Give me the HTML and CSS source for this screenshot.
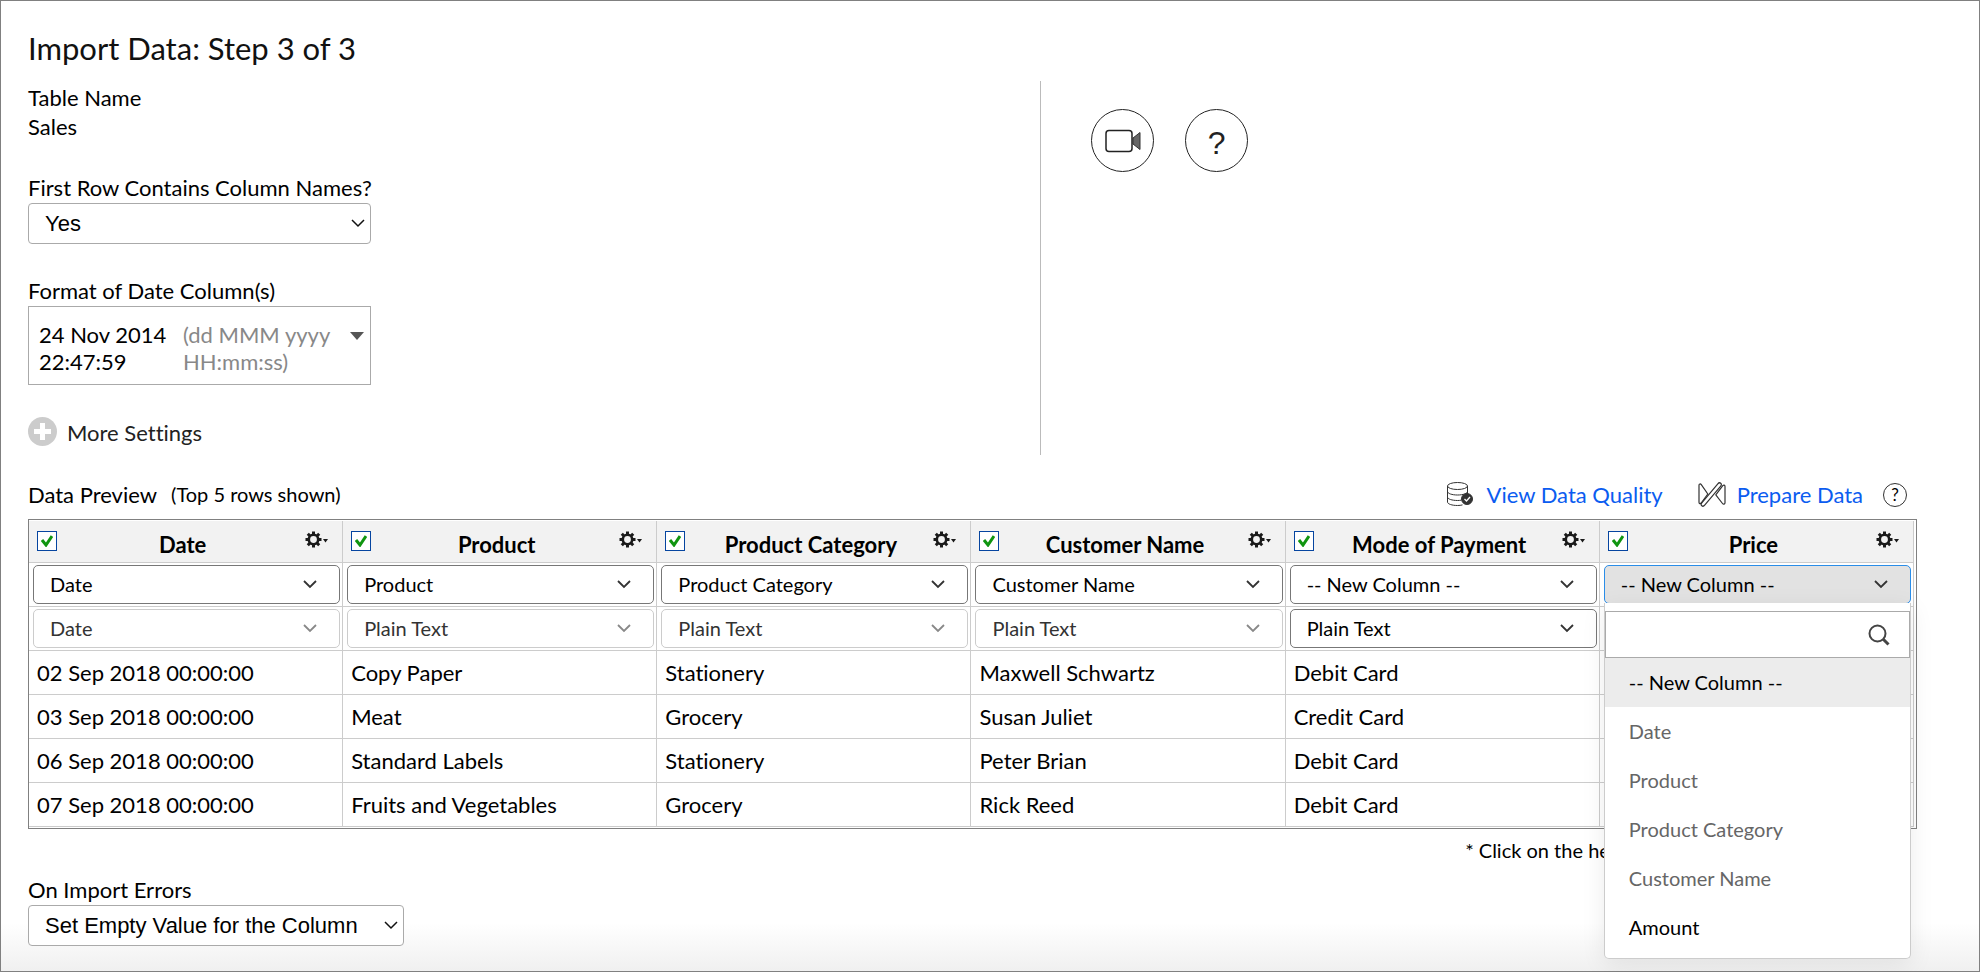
FILE: index.html
```html
<!DOCTYPE html>
<html lang="en">
<head>
  <meta charset="UTF-8" />
  <meta name="viewport" content="width=device-width, initial-scale=1.0" />
  <title>Import Data</title>
  <link rel="stylesheet" href="styles.css">
</head>
<body>
  <svg class="symbols" aria-hidden="true">
    <symbol id="gear" viewBox="0 0 24 18">
      <circle cx="8.500" cy="8.500" r="4.700" fill="none" stroke="#1a1a1a" stroke-width="2.600" />
      <path d="M8.500 .5v3M8.500 13.500v3M.5 8.500h3M13.500 8.500h3M2.800 2.800l2.200 2.200M12 12l2.200 2.200M2.800 14.200l2.200-2.200M12 5l2.200-2.200" stroke="#1a1a1a" stroke-width="3" />
      <path d="M18 8h5l-2.500 3.500z" fill="#1a1a1a" />
    </symbol>
  </svg>

  <main class="page">
    <h1>Import Data: Step 3 of 3</h1>

    <div class="settings">
      <form class="settings-form">
        <div class="field">
          <div>Table Name</div>
          <div>Sales</div>
        </div>
        <div class="field">
          <label for="first-row">First Row Contains Column Names?</label>
          <select id="first-row" class="plain-select">
            <option>Yes</option>
            <option>No</option>
          </select>
        </div>
        <div class="field">
          <label for="date-format">Format of Date Column(s)</label>
          <button type="button" id="date-format" class="date-format">
            <span class="sample">24 Nov 2014 22:47:59</span>
            <span class="pattern">(dd MMM yyyy HH:mm:ss)</span>
            <svg width="14" height="8" viewBox="0 0 14 8"><path d="M0 0h14L7 8z" fill="#555" /></svg>
          </button>
        </div>
        <button type="button" class="more">
          <svg width="29" height="29" viewBox="0 0 29 29">
            <circle cx="14.500" cy="14.500" r="14.500" fill="#ccc" />
            <path d="M14.500 6v17M6 14.500h17" stroke="#fff" stroke-width="5" />
          </svg>
          <span>More Settings</span>
        </button>
      </form>

      <div class="help">
        <button type="button" class="round" aria-label="Watch video">
          <svg width="36" height="24" viewBox="0 0 36 24">
            <path d="M28 9l7-5.500v17L28 15z" fill="#666" stroke="#333" />
            <rect x="1" y="1.500" width="26" height="21" rx="3" fill="#fff" stroke="#222" stroke-width="1.500" />
          </svg>
        </button>
        <button type="button" class="round question" aria-label="Help">?</button>
      </div>
    </div>

    <div class="preview-head">
      <h2>Data Preview</h2>
      <span class="rows-shown">(Top 5 rows shown)</span>
      <div class="links">
        <svg width="26" height="25" viewBox="0 0 26 25" fill="none" stroke="#333">
          <ellipse cx="10.500" cy="4" rx="10" ry="3.500" />
          <path d="M.5 4v16c0 2 4.500 3.500 10 3.500 2 0 3.500-.2 5-.6M20.500 4v8" />
          <path d="M.5 9.500C.5 11.500 5 13 10.500 13s10-1.500 10-3.500M.5 15c0 2 4.500 3.500 10 3.500 1.500 0 2.500-.1 3.500-.3" />
          <circle cx="20" cy="17" r="5.500" fill="#333" />
          <path d="M17.500 17l2 2 3.500-4" stroke="#fff" stroke-width="1.300" />
        </svg>
        <a href="#">View Data Quality</a>
        <svg class="prepare-icon" width="28" height="25" viewBox="0 0 28 25" fill="none" stroke="#333" stroke-width="1.200" stroke-linejoin="round">
          <path d="M9.800 12L3.300 2.700C2.500 1.500 1 1.800 1 3.200v17c0 1.500 1.200 2 2.200.8z" />
          <path d="M3.800 20.800L19.800 1.800c1-1.200 2-1.300 2.900-.6s.9 1.800 0 2.900L6.700 23.200c-1 1.200-2 1.300-2.900.6s-.9-1.900 0-3z" />
          <path d="M17.800 12.800l6.700 8.700c.9 1.200 2.500.8 2.500-.7V4.500c0-1.500-1.300-2-2.200-.8z" />
        </svg>
        <a href="#">Prepare Data</a>
        <button type="button" class="mini-help" aria-label="About preparing data">?</button>
      </div>
    </div>

    <div class="table-wrap">
      <table>
        <thead>
          <tr>
            <th><div class="col-head"><input type="checkbox" checked aria-label="Import Date"><span>Date</span><button type="button" aria-label="Date options"><svg width="24" height="18"><use href="#gear" /></svg></button></div></th>
            <th><div class="col-head"><input type="checkbox" checked aria-label="Import Product"><span>Product</span><button type="button" aria-label="Product options"><svg width="24" height="18"><use href="#gear" /></svg></button></div></th>
            <th><div class="col-head"><input type="checkbox" checked aria-label="Import Product Category"><span>Product Category</span><button type="button" aria-label="Product Category options"><svg width="24" height="18"><use href="#gear" /></svg></button></div></th>
            <th><div class="col-head"><input type="checkbox" checked aria-label="Import Customer Name"><span>Customer Name</span><button type="button" aria-label="Customer Name options"><svg width="24" height="18"><use href="#gear" /></svg></button></div></th>
            <th><div class="col-head"><input type="checkbox" checked aria-label="Import Mode of Payment"><span>Mode of Payment</span><button type="button" aria-label="Mode of Payment options"><svg width="24" height="18"><use href="#gear" /></svg></button></div></th>
            <th><div class="col-head"><input type="checkbox" checked aria-label="Import Price"><span>Price</span><button type="button" aria-label="Price options"><svg width="24" height="18"><use href="#gear" /></svg></button></div></th>
          </tr>
        </thead>
        <tbody>
          <tr class="pick-row">
            <td><select aria-label="Map Date"><option>Date</option></select></td>
            <td><select aria-label="Map Product"><option>Product</option></select></td>
            <td><select aria-label="Map Product Category"><option>Product Category</option></select></td>
            <td><select aria-label="Map Customer Name"><option>Customer Name</option></select></td>
            <td><select aria-label="Map Mode of Payment"><option>-- New Column --</option></select></td>
            <td class="open-cell">
              <select class="open" aria-label="Map Price"><option>-- New Column --</option></select>
              <div class="menu">
                <div class="search">
                  <input type="text" aria-label="Search columns">
                  <svg width="22" height="22" viewBox="0 0 22 22" fill="none" stroke="#444">
                    <circle cx="9.500" cy="9.500" r="8" stroke-width="2" />
                    <path d="M15 15l5.500 5.500" stroke-width="3" />
                  </svg>
                </div>
                <ul>
                  <li class="selected">-- New Column --</li>
                  <li class="used">Date</li>
                  <li class="used">Product</li>
                  <li class="used">Product Category</li>
                  <li class="used">Customer Name</li>
                  <li>Amount</li>
                </ul>
              </div>
            </td>
          </tr>
          <tr class="pick-row">
            <td><select disabled aria-label="Type of Date"><option>Date</option></select></td>
            <td><select disabled aria-label="Type of Product"><option>Plain Text</option></select></td>
            <td><select disabled aria-label="Type of Product Category"><option>Plain Text</option></select></td>
            <td><select disabled aria-label="Type of Customer Name"><option>Plain Text</option></select></td>
            <td><select aria-label="Type of Mode of Payment"><option>Plain Text</option></select></td>
            <td></td>
          </tr>
          <tr><td>02 Sep 2018 00:00:00</td><td>Copy Paper</td><td>Stationery</td><td>Maxwell Schwartz</td><td>Debit Card</td><td></td></tr>
          <tr><td>03 Sep 2018 00:00:00</td><td>Meat</td><td>Grocery</td><td>Susan Juliet</td><td>Credit Card</td><td></td></tr>
          <tr><td>06 Sep 2018 00:00:00</td><td>Standard Labels</td><td>Stationery</td><td>Peter Brian</td><td>Debit Card</td><td></td></tr>
          <tr><td>07 Sep 2018 00:00:00</td><td>Fruits and Vegetables</td><td>Grocery</td><td>Rick Reed</td><td>Debit Card</td><td></td></tr>
        </tbody>
      </table>
    </div>
    <p class="note">* Click on the header to change the column name.</p>

    <div class="errors">
      <label for="on-error">On Import Errors</label>
      <select id="on-error" class="plain-select wide">
        <option>Set Empty Value for the Column</option>
      </select>
    </div>
  </main>
</body>
</html>
```
FILE: styles.css
```css
* {
  margin: 0;
  padding: 0;
  box-sizing: border-box;
}
body {
  font-family: Lato, sans-serif;
  font-size: 22px;
  font-variant-ligatures: none;
  line-height: 29px;
  color: #000;
}
button,
select,
input {
  font: inherit;
  font-variant-ligatures: none;
  color: inherit;
}
button {
  background: none;
  border: none;
  cursor: pointer;
}
.symbols {
  display: none;
}
.page {
  min-height: 100vh;
  padding: 27px 62px 22px 27px;
  border: 1px solid #808080;
  background: linear-gradient(to top, #f0f0f0, #fff 48px);
}
h1 {
  font-size: 31px;
  font-weight: 400;
  line-height: 40px;
  margin-bottom: 13px;
  color: #111;
}

/* settings */
.settings {
  display: grid;
  grid-template-columns: 59fr 51fr;
}
.settings-form {
  padding: 2px 0 9px;
  border-right: 1px solid #bbb;
}
.field {
  margin-bottom: 32px;
}
.field label,
.errors label {
  display: block;
  margin-bottom: 1px;
}
.plain-select {
  display: block;
  width: 343px;
  height: 41px;
  padding: 0 16px;
  border: 1px solid #aaa;
  border-radius: 4px;
  font-family: "Liberation Sans", Arial, sans-serif;
  appearance: none;
  background: #fff url("data:image/svg+xml,%3Csvg xmlns='http://www.w3.org/2000/svg' width='14' height='9' fill='none' stroke='%23111' stroke-width='1.5'%3E%3Cpath d='M1 1l6 6 6-6'/%3E%3C/svg%3E") no-repeat right 5px center;
}
.plain-select.wide {
  width: 376px;
}
.date-format {
  display: flex;
  align-items: flex-start;
  width: 343px;
  padding: 14px 6px 9px 10px;
  border: 1px solid #aaa;
  background: #fff;
  line-height: 27px;
  text-align: left;
}
.date-format .sample {
  width: 144px;
}
.date-format .pattern {
  flex: 1;
  padding-right: 16px;
  color: #888;
}
.date-format svg {
  margin-top: 11px;
}
.more {
  display: flex;
  align-items: center;
  gap: 10px;
  color: #222;
}
.more span {
  padding-top: 3px;
  line-height: 26px;
}
.help {
  display: flex;
  gap: 31px;
  padding: 28px 50px;
}
.round {
  display: flex;
  align-items: center;
  justify-content: center;
  width: 63px;
  height: 63px;
  border: 1px solid #222;
  border-radius: 50%;
  color: #222;
}
.round.question {
  padding-top: 5px;
  font-family: "Liberation Sans", Arial, sans-serif;
  font-size: 32px;
}

/* preview */
.preview-head {
  display: flex;
  margin: 25px 0 10px;
}
.preview-head h2 {
  font-size: 22px;
  font-weight: 400;
}
.rows-shown {
  margin-left: 14px;
  font-size: 20px;
}
.links {
  display: flex;
  align-items: center;
  margin: 0 10px 0 auto;
}
.links a {
  margin-left: 14px;
  color: #0b5cf0;
  text-decoration: none;
}
.prepare-icon {
  margin-left: 35px;
}
.links .prepare-icon + a {
  margin-left: 11px;
}
.mini-help {
  width: 24px;
  height: 24px;
  margin-left: 20px;
  border: 1px solid #333;
  border-radius: 50%;
  font-size: 17px;
  line-height: 22px;
}
.table-wrap {
  padding: 1px 2px 1px 0;
  border: 1px solid #808080;
  background: #fff;
}
table {
  width: 100%;
  table-layout: fixed;
  border-collapse: separate;
  border-spacing: 0;
}
th,
td {
  height: 44px;
  padding: 0 8px;
  border-right: 1px solid #ccc;
  border-bottom: 1px solid #ccc;
  text-align: left;
  white-space: nowrap;
}
th {
  height: 42px;
  background: #f2f2f2;
}
.col-head {
  display: flex;
  align-items: center;
}
.col-head span {
  flex: 1;
  padding: 6px 0 0 3px;
  text-align: center;
}
.col-head button {
  display: flex;
  padding: 0 5px 3px 0;
}
.col-head input {
  width: 20px;
  height: 20px;
  margin-bottom: 2px;
  border: 1px solid #0645a0;
  appearance: none;
  background: #fff url("data:image/svg+xml,%3Csvg xmlns='http://www.w3.org/2000/svg' width='12' height='12' fill='none' stroke='%23109510' stroke-width='3'%3E%3Cpath d='M1 5l4 5 6-9'/%3E%3C/svg%3E") no-repeat center;
}
.pick-row td {
  padding: 0 2px 0 4px;
}
.pick-row select {
  display: block;
  width: 100%;
  height: 39px;
  padding: 0 16px;
  border: 1px solid #777;
  border-radius: 5px;
  font-size: 20px;
  appearance: none;
  background: #fff url("data:image/svg+xml,%3Csvg xmlns='http://www.w3.org/2000/svg' width='14' height='9' fill='none' stroke='%23333' stroke-width='1.8'%3E%3Cpath d='M1 1l6 6 6-6'/%3E%3C/svg%3E") no-repeat right 22px center;
}
.pick-row select:disabled {
  border-color: #ccc;
  color: #333;
  opacity: 1;
  background-image: url("data:image/svg+xml,%3Csvg xmlns='http://www.w3.org/2000/svg' width='14' height='9' fill='none' stroke='%23888' stroke-width='1.8'%3E%3Cpath d='M1 1l6 6 6-6'/%3E%3C/svg%3E");
}
.pick-row select.open {
  border-color: #2a8de8;
  background-color: #e2e2e2;
}

/* open column menu */
.open-cell {
  position: relative;
}
.menu {
  position: absolute;
  top: 40px;
  left: 4px;
  right: 2px;
  z-index: 1;
  padding: 8px 0 6px;
  border: 1px solid #ccc;
  border-top: none;
  border-radius: 0 0 5px 5px;
  background: #fff;
  box-shadow: 0 6px 24px rgba(0, 0, 0, 0.08);
  font-size: 20px;
}
.search {
  display: flex;
  align-items: center;
  height: 47px;
  padding-right: 19px;
  border: 1px solid #aaa;
}
.search input {
  flex: 1;
  min-width: 0;
  height: 100%;
  padding-left: 12px;
  border: none;
  outline: none;
  background: none;
}
.menu ul {
  list-style: none;
}
.menu li {
  padding: 10px 24px;
}
.menu .used {
  color: #666;
}
.menu .selected {
  background: #ececec;
}
.note {
  margin-top: 7px;
  padding-right: 16px;
  font-size: 20px;
  text-align: right;
}
.errors {
  margin-top: 10px;
}
```
